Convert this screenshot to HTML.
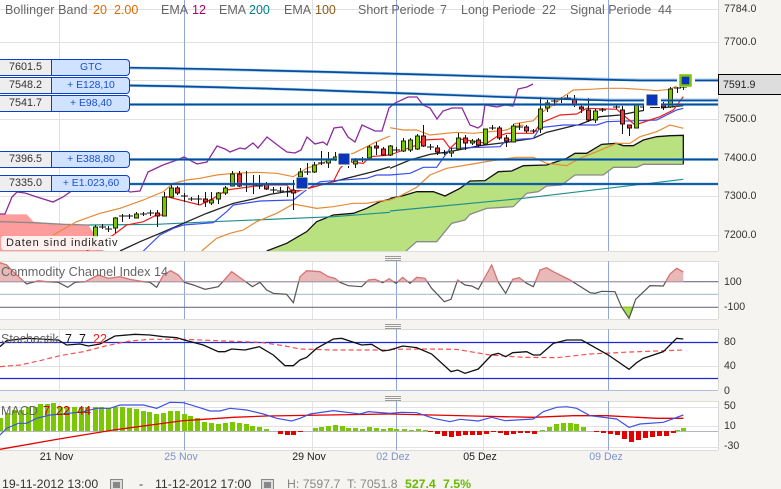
<!DOCTYPE html>
<html><head><meta charset="utf-8"><style>
html,body{margin:0;padding:0;background:#f5f4f0;width:781px;height:489px;overflow:hidden}
#r{position:relative;width:781px;height:489px;overflow:hidden;font-family:"Liberation Sans",sans-serif}
svg{position:absolute;left:0;top:0}
polyline,polygon{vector-effect:non-scaling-stroke;fill:none}
.t{position:absolute;white-space:pre;font-size:12.5px;line-height:14px;color:#666}
.a{position:absolute;left:724px;font-size:10.6px;line-height:14px;color:#333;white-space:pre}
.d{position:absolute;top:450px;font-size:10.6px;line-height:14px;white-space:pre;color:#222;transform:translateX(-50%)}
.b{color:#7f93cc}
.box{position:absolute;left:-3px;width:131px;height:15px;border:1px solid #0a3fc8;border-radius:4px;background:#cfe2ff;overflow:hidden;line-height:15px}
.box i{position:absolute;left:0;top:0;width:54px;height:15px;background:#eee;border-right:1px solid #0a3fc8;font-style:normal;color:#333;text-align:center;padding-left:2px;box-sizing:border-box;font-size:10.8px}
.box b{position:absolute;left:55px;width:76px;top:0;font-weight:normal;text-align:center;color:#1a4fd0;font-size:10.4px}
.f{position:absolute;top:476px;font-size:12.3px;line-height:16px;white-space:pre;color:#333}
</style></head><body><div id="r">
<svg width="781" height="489" viewBox="0 0 781 489">
<defs>
<clipPath id="m"><rect x="0" y="0" width="718" height="251"/></clipPath>
<clipPath id="up"><rect x="0" y="261" width="718" height="21"/></clipPath>
<clipPath id="dn"><rect x="0" y="282" width="718" height="46"/></clipPath>
</defs>
<!-- panels -->
<rect x="0" y="0" width="718" height="251" fill="#fff"/>
<rect x="0" y="261" width="718" height="58" fill="#fff"/>
<rect x="0" y="329" width="718" height="61" fill="#fff"/>
<rect x="0" y="401" width="718" height="49" fill="#fff"/>
<g fill="none" stroke="#e2e2e2" stroke-width="1">
<path d="M0 9.5H718M0 42.5H718M0 80.5H718M0 119.5H718M0 158.5H718M0 196.5H718M0 235.5H718"/>
<path d="M0 366.5H718M0 407.5H718M0 426.5H718M0 447.5H718"/>
<path d="M59.5 0V251M312.5 0V251M483.5 0V251M59.5 261V319M312.5 261V319M483.5 261V319M59.5 329V390M312.5 329V390M483.5 329V390M59.5 401V450M312.5 401V450M483.5 401V450"/>
<path d="M718.5 0V251M718.5 261V319M718.5 329V390M718.5 401V450" stroke="#d8d8d4"/>
<path d="M0 251.5H718M0 261.5H718M0 319.5H718M0 329.5H718M0 401.5H718M0 450.5H718" stroke="#dcdcd8"/>
</g>
<path d="M0 390.5H718" stroke="#a9c0d8"/>
<g stroke="#93a6da" stroke-width="1" fill="none">
<path d="M184.5 0V251M396.5 0V251M608.5 0V251M184.5 261V319M396.5 261V319M608.5 261V319M184.5 329V390M396.5 329V390M608.5 329V390M184.5 401V450M396.5 401V450M608.5 401V450"/>
</g>
<!-- grips -->
<g stroke="#9a9a9a" stroke-width="1"><path d="M385 256.5H401M385 258.5H401M385 260.5H401M385 324.5H401M385 326.5H401M385 328.5H401M385 396.5H401M385 398.5H401M385 400.5H401"/></g>

<g clip-path="url(#m)">
<!-- red cloud -->
<g transform="matrix(.33333 0 0 .33333 0 125)">
<polygon style="fill:#fe9c9c" points="0,268 80,268 100,290 190,298 265,300 285,330 312,380 0,380"/>
<polyline stroke="#8a8a8a" stroke-width="1.3" points="0,290 100,293 190,298 265,300"/>
<!-- green cloud -->
<polygon style="fill:#b9e17f" points="800,380 860,355 920,320 950,290 1000,270 1060,265 1100,250 1140,230 1170,222 1170,380"/>
<polyline stroke="#111" stroke-width="1.3" points="800,378 860,355 920,320 950,290 1000,270 1060,265 1100,250 1140,230 1170,222"/>
</g>
<g transform="matrix(.33333 0 0 .33333 390 125)">
<polygon style="fill:#b9e17f" points="0,220 40,212 80,200 130,200 165,213 210,190 240,168 285,167 325,140 365,138 400,122 470,120 530,100 555,85 590,85 635,58 680,55 700,62 730,62 760,45 800,35 840,32 880,31 880,118 760,118 740,127 670,127 640,150 555,150 515,180 470,183 445,200 410,205 370,245 290,250 240,268 225,285 185,295 140,350 80,350 48,378 0,385"/>
<polyline stroke="#111" stroke-width="1.3" points="0,220 40,212 80,200 130,200 165,213 210,190 240,168 285,167 325,140 365,138 400,122 470,120 530,100 555,85 590,85 635,58 680,55 700,62 730,62 760,45 800,35 840,32 880,31 880,118"/>
<polyline stroke="#8a8a8a" stroke-width="1.3" points="880,118 760,118 740,127 670,127 640,150 555,150 515,180 470,183 445,200 410,205 370,245 290,250 240,268 225,285 185,295 140,350 80,350 48,378"/>
<polyline stroke="#1e8f8f" stroke-width="1.2" points="0,258 400,220 880,163"/>
<polyline stroke="#e58a35" stroke-width="1.2" points="0,225 30,213 80,187 120,150 170,130 230,120 300,108 380,97 430,97 470,115 530,122 570,100 620,80 680,55 720,55 750,35 800,20 840,0 880,10"/>
<polyline stroke="#e58a35" stroke-width="1.2" points="0,8 40,15 80,15 120,30 200,22 250,25 300,20 350,15 370,5 400,0"/>
<polyline stroke="#222" stroke-width="1.3" points="0,130 60,105 120,88 180,80 270,62 350,52 430,40 470,22 560,0"/>
<polyline stroke="#3a4cf0" stroke-width="1.2" points="0,150 60,145 100,127 140,127 180,70 330,65 350,45 430,40 450,8 520,0 620,0"/>
<polyline stroke="#f01d1d" stroke-width="1.2" points="0,90 40,75 80,60 100,45 160,42 180,70 210,42 290,55 320,35 350,25 430,25 445,5 450,-15"/>
</g>
<g transform="matrix(.33333 0 0 .33333 0 125)">
<polyline stroke="#1e8f8f" stroke-width="1.2" points="265,300 470,298 640,290 1000,275 1170,262"/>
<polyline stroke="#e58a35" stroke-width="1.2" points="160,330 230,290 300,265 360,250 430,225 490,200 520,175 560,165 600,160 650,150 700,145 770,142 830,145 880,155 920,130 965,115 1010,95 1060,85 1100,65 1130,50 1170,33"/>
<polyline stroke="#e58a35" stroke-width="1.2" points="605,378 650,340 690,325 730,315 770,290 830,265 880,237 950,250 1000,245 1060,235 1100,235 1140,228 1170,225"/>
<polyline stroke="#222" stroke-width="1.3" points="360,378 420,350 480,325 550,295 620,265 700,235 760,222 810,208 860,200 880,197 925,190 1000,170 1060,155 1120,140 1170,125"/>
<polyline stroke="#3a4cf0" stroke-width="1.2" points="430,378 480,330 520,310 550,300 640,293 680,260 700,240 780,228 880,225 925,190 960,170 1100,160 1130,150 1170,150"/>
<polyline stroke="#f01d1d" stroke-width="1.2" points="260,378 340,330 380,300 430,290 470,270 490,270 500,215 600,240 640,220 680,195 790,180 860,180 880,205 905,195 1000,170 1020,130 1040,110 1090,115 1110,95 1170,90"/>
</g>
<polyline stroke="#8c2a9c" stroke-width="1.3" points="0,214 5,214 12,197 17,192 25,193 37,197 53,202 63,197 80,185 120,186 130,192 140,191 148,172 163,165 177,160 184,157 197,164 207,162 217,146 225,149 230,152 240,148 245,149 253,143 258,148 267,137 280,147 287,152 295,153 301,150 307,137 315,144 323,142 327,145 334,128 342,127 348,137 355,142 362,125 375,131 382,131 389,108 395,103 408,97 417,97 423,105 430,108 437,119 443,111 452,108 462,108 470,125 478,128 482,125 485,105 497,107 505,105 513,106 518,89 527,87 533,84"/>
<g transform="matrix(.33333 0 0 .33333 390 0)">
<polyline stroke="#e58a35" stroke-width="1.2" points="370,372 430,362 450,340 490,315 520,290 550,270 600,268 650,265 700,265 750,268 800,272 840,268 860,258"/>
<polyline stroke="#222" stroke-width="1.3" points="565,375 630,350 690,345 740,335 800,325 880,317"/>
<polyline stroke="#3a4cf0" stroke-width="1.2" points="620,375 650,365 800,360 830,345 860,330 880,325"/>
<polyline stroke="#f01d1d" stroke-width="1.2" points="450,370 510,345 560,342 590,325 680,328 700,345 735,375 780,360 810,350 850,330 880,290"/>
</g>
<!-- candles wicks -->
<path fill="none" stroke="#111" stroke-width="1" d="M95.5 225V237M102.5 224V229M99 227H106M108.5 226V232M105 229H112M115.5 217V233M122.5 214V222M119 216H126M129.5 214V219M126 216H133M136.5 212V218M143.5 212V216M140 214H147M150.5 210V216M147 213H154M157.5 210V227M164.5 192V216M171.5 184V198M177.5 186V195M184.5 193V202M181 196H188M191.5 197V201M188 199H195M198.5 195V205M195 199H202M205.5 192V207M211.5 192V205M218.5 192V204M225.5 186V195M232.5 171V186M239.5 171V187M246.5 171V192M243 185H250M253.5 175V194M250 185H257M259.5 175V189M256 186H263M266.5 182V190M273.5 187V193M270 190H277M280.5 187V193M277 191H284M287.5 187V197M284 192H291M293.5 180V210M300.5 168V178M307.5 163V175M304 172H311M314.5 162V173M321.5 151V165M318 163H325M328.5 152V168M335.5 152V161M348.5 158V168M345 161H352M355.5 158V168M362.5 157V162M359 159H366M369.5 145V158M376.5 142V155M383.5 147V156M390.5 145V156M396.5 147V152M393 150H400M403.5 138V152M410.5 138V152M417.5 134V150M423.5 125V147M430.5 144V150M427 147H434M437.5 145V155M444.5 150V155M441 153H448M451.5 148V157M458.5 133V149M465.5 135V150M472.5 139V145M478.5 138V147M485.5 129V144M492.5 125V130M489 128H496M499.5 126V140M506.5 135V147M513.5 124V142M519.5 123V130M516 127H523M526.5 125V133M533.5 129V133M530 131H537M540.5 97V133M547.5 100V112M554.5 99V106M551 101H558M561.5 97V103M558 99H565M567.5 95V100M564 98H571M574.5 95V107M581.5 105V113M588.5 98V122M595.5 109V123M602.5 108V112M599 110H606M616.5 105V109M613 107H620M622.5 106V134M629.5 128V136M636.5 105V128M643.5 105V110M640 107H647M663.5 102V110M670.5 87V108M677.5 81V93M674 88H681M683.5 87V90M680 87H687"/>
<!-- green bodies -->
<path fill="#7fc400" stroke="#1c2a00" stroke-width="1" d="M93.5 227h4v10h-4zM113.5 218h4v10h-4zM134.5 214h4v4h-4zM162.5 197h4v19h-4zM169.5 188h4v9h-4zM209.5 200h4v3h-4zM216.5 193h4v6h-4zM223.5 188h4v5h-4zM230.5 174h4v12h-4zM298.5 172h4v5h-4zM312.5 165h4v7h-4zM326.5 160h4v3h-4zM333.5 157h4v3h-4zM353.5 161h4v3h-4zM367.5 147h4v11h-4zM388.5 146h4v9h-4zM401.5 141h4v10h-4zM408.5 140h4v10h-4zM415.5 136h4v13h-4zM449.5 151h4v2h-4zM456.5 138h4v11h-4zM470.5 141h4v2h-4zM483.5 129h4v15h-4zM511.5 126h4v16h-4zM538.5 109h4v20h-4zM545.5 103h4v5h-4zM593.5 111h4v9h-4zM634.5 105h4v23h-4zM668.5 89h4v18h-4z"/>
<!-- red bodies -->
<path fill="#e83a3a" stroke="#2a0808" stroke-width="1" d="M155.5 213h4v3h-4zM175.5 188h4v5h-4zM203.5 199h4v3h-4zM237.5 174h4v12h-4zM264.5 184h4v5h-4zM291.5 190h4v3h-4zM374.5 146h4v2h-4zM381.5 149h4v6h-4zM421.5 136h4v10h-4zM435.5 148h4v4h-4zM463.5 138h4v5h-4zM476.5 140h4v5h-4zM497.5 128h4v10h-4zM504.5 138h4v3h-4zM524.5 127h4v4h-4zM572.5 99h4v6h-4zM579.5 107h4v2h-4zM586.5 110h4v10h-4zM620.5 110h4v14h-4zM627.5 125h4v3h-4zM661.5 105h4v2h-4z"/>
<!-- order lines -->
<g fill="none">
<path stroke="#4d8fd0" stroke-opacity=".45" stroke-width="3" d="M130 68C300 70 450 76 640 80H718M130 85.5C300 88 450 96 610 100H718M130 104.5H718M130 159.5H718M130 184H718"/>
<path stroke="#004f9f" stroke-width="1.7" d="M130 67.7C300 70 450 76 640 80.5H718M130 85.5C300 88 450 96 610 100.5H718M130 104.5H718M130 159.5H718M130 184H718"/>
</g>
<!-- markers -->
<rect x="644" y="93" width="17" height="21" fill="#fff"/>
<rect x="647" y="95" width="10" height="10" fill="#0a35c0" stroke="#123f80"/>
<path d="M650 107.5H660" stroke="#222"/>
<rect x="337" y="153" width="14" height="13" fill="#fff"/><rect x="339" y="154" width="10" height="10" fill="#0a35c0" stroke="#123f80"/>
<rect x="295" y="177" width="13" height="13" fill="#fff"/><rect x="297" y="178" width="10" height="10" fill="#0a35c0" stroke="#123f80"/>
<rect x="677" y="74" width="18" height="13" fill="#fff"/>
<rect x="680.5" y="75.5" width="10" height="10" fill="#0a35c0" stroke="#7dc400" stroke-width="2.5"/>
</g>

<!-- CCI -->
<g transform="matrix(.33333 0 0 .33333 0 250)" clip-path="none">
<polyline stroke="#6f6f8c" stroke-width="1.2" points="0,95 1170,95"/>
<polyline stroke="#a9c0d4" stroke-width="1.2" points="0,133 1170,133"/>
<polyline stroke="#6f6f8c" stroke-width="1.2" points="0,172 1170,172"/>
</g>
<g transform="matrix(.33333 0 0 .33333 390 250)">
<polyline stroke="#6f6f8c" stroke-width="1.2" points="0,95 985,95"/>
<polyline stroke="#a9c0d4" stroke-width="1.2" points="0,133 985,133"/>
<polyline stroke="#6f6f8c" stroke-width="1.2" points="0,172 985,172"/>
</g>
<g clip-path="url(#up)">
<g transform="matrix(.33333 0 0 .33333 0 250)">
<polygon style="fill:#e9b8b8" points="0,95 0,38 20,45 50,75 80,102 115,92 140,95 175,97 203,112 225,97 255,95 295,75 325,85 360,80 390,88 430,95 450,97 470,112 490,75 512,62 535,75 553,97 580,105 615,118 655,110 695,65 730,90 757,110 780,97 800,120 820,130 860,133 880,158 900,80 920,62 960,65 985,80 1005,85 1020,97 1045,107 1085,110 1105,90 1125,88 1148,98 1170,85 1170,95"/>
</g>
<g transform="matrix(.33333 0 0 .33333 390 250)">
<polygon style="fill:#e9b8b8" points="0,95 0,88 18,100 38,82 60,100 80,82 105,85 125,115 163,155 183,148 203,90 225,105 245,108 265,118 305,45 325,97 347,130 368,88 388,83 410,100 430,110 450,60 470,53 490,65 540,90 600,128 615,130 635,124 675,125 695,172 717,205 737,148 780,107 820,108 840,72 860,55 880,66 880,95"/>
</g>
</g>
<polygon style="fill:#a9dd5c;stroke:#7dc400;stroke-width:1" points="621.7,307.3 629,318.3 633.5,307.3"/>
<g clip-path="url(#up)">
<g transform="matrix(.33333 0 0 .33333 0 250)"><polyline stroke="#d77373" stroke-width="1.3" points="0,38 20,45 50,75 80,102 115,92 140,95 175,97 203,112 225,97 255,95 295,75 325,85 360,80 390,88 430,95 450,97 470,112 490,75 512,62 535,75 553,97 580,105 615,118 655,110 695,65 730,90 757,110 780,97 800,120 820,130 860,133 880,158 900,80 920,62 960,65 985,80 1005,85 1020,97 1045,107 1085,110 1105,90 1125,88 1148,98 1170,85"/></g>
<g transform="matrix(.33333 0 0 .33333 390 250)"><polyline stroke="#d77373" stroke-width="1.3" points="0,88 18,100 38,82 60,100 80,82 105,85 125,115 163,155 183,148 203,90 225,105 245,108 265,118 305,45 325,97 347,130 368,88 388,83 410,100 430,110 450,60 470,53 490,65 540,90 600,128 615,130 635,124 675,125 695,172 717,205 737,148 780,107 820,108 840,72 860,55 880,66"/></g>
</g>
<g clip-path="url(#dn)">
<g transform="matrix(.33333 0 0 .33333 0 250)"><polyline stroke="#555" stroke-width="1.2" points="0,38 20,45 50,75 80,102 115,92 140,95 175,97 203,112 225,97 255,95 295,75 325,85 360,80 390,88 430,95 450,97 470,112 490,75 512,62 535,75 553,97 580,105 615,118 655,110 695,65 730,90 757,110 780,97 800,120 820,130 860,133 880,158 900,80 920,62 960,65 985,80 1005,85 1020,97 1045,107 1085,110 1105,90 1125,88 1148,98 1170,85"/></g>
<g transform="matrix(.33333 0 0 .33333 390 250)"><polyline stroke="#555" stroke-width="1.2" points="0,88 18,100 38,82 60,100 80,82 105,85 125,115 163,155 183,148 203,90 225,105 245,108 265,118 305,45 325,97 347,130 368,88 388,83 410,100 430,110 450,60 470,53 490,65 540,90 600,128 615,130 635,124 675,125 695,172 717,205 737,148 780,107 820,108 840,72 860,55 880,66"/></g>
</g>
<!-- Stoch -->
<path d="M0 342.5H718M0 378.5H718" stroke="#1f26d8" stroke-width="1.2"/>
<g transform="matrix(.33333 0 0 .33333 0 250)">
<polyline stroke="#f55050" stroke-width="1.2" stroke-dasharray="5 3" points="0,350 60,345 120,332 180,317 250,305 320,287 390,273 450,268 553,268 650,272 780,277 850,287 900,297 1000,300 1170,300"/>
<polyline stroke="#111" stroke-width="1.3" points="0,290 20,272 80,265 175,270 200,285 240,282 265,288 300,282 345,258 405,253 450,255 490,260 530,263 553,270 610,285 655,305 675,305 695,297 735,300 778,290 820,315 855,347 880,347 900,330 920,322 950,295 1000,267 1025,265 1085,285 1115,283 1148,303 1170,300"/>
</g>
<g transform="matrix(.33333 0 0 .33333 390 250)">
<polyline stroke="#f55050" stroke-width="1.2" stroke-dasharray="5 3" points="0,298 100,297 200,298 300,315 400,322 500,323 600,312 720,306 880,300"/>
<polyline stroke="#111" stroke-width="1.3" points="0,300 38,288 80,293 125,312 183,365 203,360 225,370 265,357 305,315 325,310 347,320 368,308 410,305 430,315 450,315 490,280 530,270 575,270 655,315 717,358 740,338 760,325 820,305 860,265 880,267"/>
</g>
<!-- MACD -->
<path d="M0 431.5H718" stroke="#b4b4c4"/>
<path fill="#7cc800" d="M0 418h3v13h-3zM5 413h5v18h-5zM12 410h5v21h-5zM19 410h5v21h-5zM26 407h5v24h-5zM33 407h5v24h-5zM38 404h5v27h-5zM45 404h5v27h-5zM51 403h5v28h-5zM58 407h5v24h-5zM65 407h5v24h-5zM72 407h5v24h-5zM79 407h5v24h-5zM85 407h5v24h-5zM93 407h5v24h-5zM99 407h5v24h-5zM106 408h5v23h-5zM113 407h5v24h-5zM120 407h5v24h-5zM127 408h5v23h-5zM134 409h5v22h-5zM141 411h5v20h-5zM147 412h5v19h-5zM154 414h5v17h-5zM161 413h5v18h-5zM168 411h5v20h-5zM175 411h5v20h-5zM182 414h5v17h-5zM188 416h5v15h-5zM195 418h5v13h-5zM202 422h5v9h-5zM209 423h5v8h-5zM216 424h5v7h-5zM223 423h5v8h-5zM230 422h5v9h-5zM237 423h5v8h-5zM244 424h5v7h-5zM250 426h5v5h-5zM257 427h5v4h-5zM264 429h5v2h-5zM313 428h5v3h-5zM319 427h5v4h-5zM326 426h5v5h-5zM333 425h5v6h-5zM340 426h5v5h-5zM346 428h5v3h-5zM353 428h5v3h-5zM360 429h5v2h-5zM367 427h5v4h-5zM374 428h5v3h-5zM381 429h5v2h-5zM388 428h5v3h-5zM394 429h5v2h-5zM402 429h5v2h-5zM409 430h5v1h-5zM416 429h5v2h-5zM423 430h5v1h-5zM540 430h5v1h-5zM547 427h5v4h-5zM554 424h5v7h-5zM561 423h5v8h-5zM568 423h5v8h-5zM574 424h5v7h-5zM581 427h5v4h-5zM675 430h5v1h-5zM681 428h5v3h-5z"/>
<path fill="#e40000" d="M278 431h5v3h-5zM285 431h5v4h-5zM291 431h5v4h-5zM298 431h5v1h-5zM428 431h5v1h-5zM435 431h5v3h-5zM442 431h5v5h-5zM449 431h5v6h-5zM456 431h5v5h-5zM463 431h5v4h-5zM470 431h5v4h-5zM477 431h5v4h-5zM484 431h5v3h-5zM491 431h5v1h-5zM498 431h5v2h-5zM504 431h5v4h-5zM511 431h5v3h-5zM518 431h5v2h-5zM525 431h5v2h-5zM532 431h5v3h-5zM594 431h5v1h-5zM601 431h5v2h-5zM608 431h5v3h-5zM615 431h5v4h-5zM622 431h5v8h-5zM629 431h5v11h-5zM636 431h5v9h-5zM643 431h5v7h-5zM650 431h5v6h-5zM657 431h5v5h-5zM664 431h5v5h-5zM671 431h5v2h-5z"/>
<g transform="matrix(.33333 0 0 .33333 0 390)">
<polyline stroke="#e40000" stroke-width="1.3" points="0,178 170,148 340,120 550,92 700,82 800,78 1170,72"/>
<polyline stroke="#3f52e0" stroke-width="1.2" points="0,135 20,115 55,100 80,100 110,85 150,75 190,72 250,65 290,55 330,55 360,45 430,45 470,55 510,37 550,38 590,50 630,63 660,63 690,55 740,60 790,72 830,85 875,93 900,85 930,72 1000,62 1040,67 1080,72 1105,65 1170,70"/>
</g>
<g transform="matrix(.33333 0 0 .33333 390 390)">
<polyline stroke="#e40000" stroke-width="1.3" points="0,72 250,78 430,82 550,77 650,77 800,85 880,85"/>
<polyline stroke="#3f52e0" stroke-width="1.2" points="0,70 35,67 80,68 130,85 180,95 210,88 265,93 305,82 345,92 430,87 460,65 500,52 530,50 560,55 600,77 680,87 717,112 750,102 820,97 880,75"/>
</g>
<!-- calendar icons -->
<g fill="#ddd" stroke="#888"><rect x="110.5" y="479.5" width="12" height="12"/><rect x="261.5" y="479.5" width="12" height="12"/></g>
<g fill="#888"><rect x="113" y="482" width="7" height="6"/><rect x="264" y="482" width="7" height="6"/></g>
</svg>

<!-- Price box -->
<div style="position:absolute;left:718px;top:74px;width:62px;height:19px;background:#ddd;border:1px solid #000;border-right:none"></div>
<div class="a" style="top:78px;left:723px;color:#222">7591.9</div>

<!-- header -->
<span class="t" style="left:5px;top:3px;letter-spacing:.1px">Bollinger Band</span>
<span class="t" style="left:93px;top:3px;color:#e06a00">20</span>
<span class="t" style="left:114px;top:3px;color:#e06a00">2.00</span>
<span class="t" style="left:161px;top:3px">EMA</span>
<span class="t" style="left:192px;top:3px;color:#b0006a">12</span>
<span class="t" style="left:219px;top:3px">EMA</span>
<span class="t" style="left:249px;top:3px;color:#007f8c">200</span>
<span class="t" style="left:284px;top:3px">EMA</span>
<span class="t" style="left:315px;top:3px;color:#8b5a12">100</span>
<span class="t" style="left:358px;top:3px">Short Periode</span>
<span class="t" style="left:440px;top:3px">7</span>
<span class="t" style="left:461px;top:3px">Long Periode</span>
<span class="t" style="left:542px;top:3px">22</span>
<span class="t" style="left:570px;top:3px">Signal Periode</span>
<span class="t" style="left:658px;top:3px">44</span>

<!-- order boxes -->
<div class="box" style="top:59px"><i>7601.5</i><b>GTC</b></div>
<div class="box" style="top:77px"><i>7548.2</i><b>+ E128,10</b></div>
<div class="box" style="top:95px"><i>7541.7</i><b>+ E98,40</b></div>
<div class="box" style="top:151px"><i>7396.5</i><b>+ E388,80</b></div>
<div class="box" style="top:175px"><i>7335.0</i><b>+ E1.023,60</b></div>

<div style="position:absolute;left:1px;top:236px;width:116px;height:14px;background:rgba(255,255,255,.85);border-radius:3px"></div>
<span class="t" style="left:6px;top:236px;color:#222;font-size:11px;letter-spacing:.85px">Daten sind indikativ</span>

<!-- panel labels -->
<span class="t" style="left:1px;top:265px;font-size:12.7px">Commodity Channel Index</span>
<span class="t" style="left:154px;top:265px">14</span>
<span class="t" style="left:1px;top:332px;font-size:12.5px">Stochastik</span>
<span class="t" style="left:65px;top:332px;color:#111">7</span>
<span class="t" style="left:79px;top:332px;color:#111">7</span>
<span class="t" style="left:93px;top:332px;color:#f02020">22</span>
<span class="t" style="left:1px;top:404px">MACD</span>
<span class="t" style="left:43px;top:404px;color:#cc0000">7</span>
<span class="t" style="left:56px;top:404px;color:#cc0000">22</span>
<span class="t" style="left:77px;top:404px;color:#cc0000">44</span>

<!-- axis -->
<span class="a" style="top:2px">7784.0</span>
<span class="a" style="top:35px">7700.0</span>
<span class="a" style="top:112px">7500.0</span>
<span class="a" style="top:151px">7400.0</span>
<span class="a" style="top:189px">7300.0</span>
<span class="a" style="top:228px">7200.0</span>
<span class="a" style="top:275px">100</span>
<span class="a" style="top:300px">-100</span>
<span class="a" style="top:335px">80</span>
<span class="a" style="top:359px">40</span>
<span class="a" style="top:384px">0</span>
<span class="a" style="top:399px">50</span>
<span class="a" style="top:419px">10</span>
<span class="a" style="top:439px">-30</span>

<!-- dates -->
<span class="d" style="left:56.5px">21 Nov</span>
<span class="d b" style="left:181px">25 Nov</span>
<span class="d" style="left:309px">29 Nov</span>
<span class="d b" style="left:393px">02 Dez</span>
<span class="d" style="left:480px">05 Dez</span>
<span class="d b" style="left:606px">09 Dez</span>

<!-- footer -->
<span class="f" style="left:2px">19-11-2012 13:00</span>
<span class="f" style="left:139px">-</span>
<span class="f" style="left:155px">11-12-2012 17:00</span>
<span class="f" style="left:287px;color:#888">H: 7597.7</span>
<span class="f" style="left:347px;color:#888">T: 7051.8</span>
<span class="f" style="left:405px;color:#66bb00;font-weight:bold">527.4</span>
<span class="f" style="left:443px;color:#66bb00;font-weight:bold">7.5%</span>
</div></body></html>
